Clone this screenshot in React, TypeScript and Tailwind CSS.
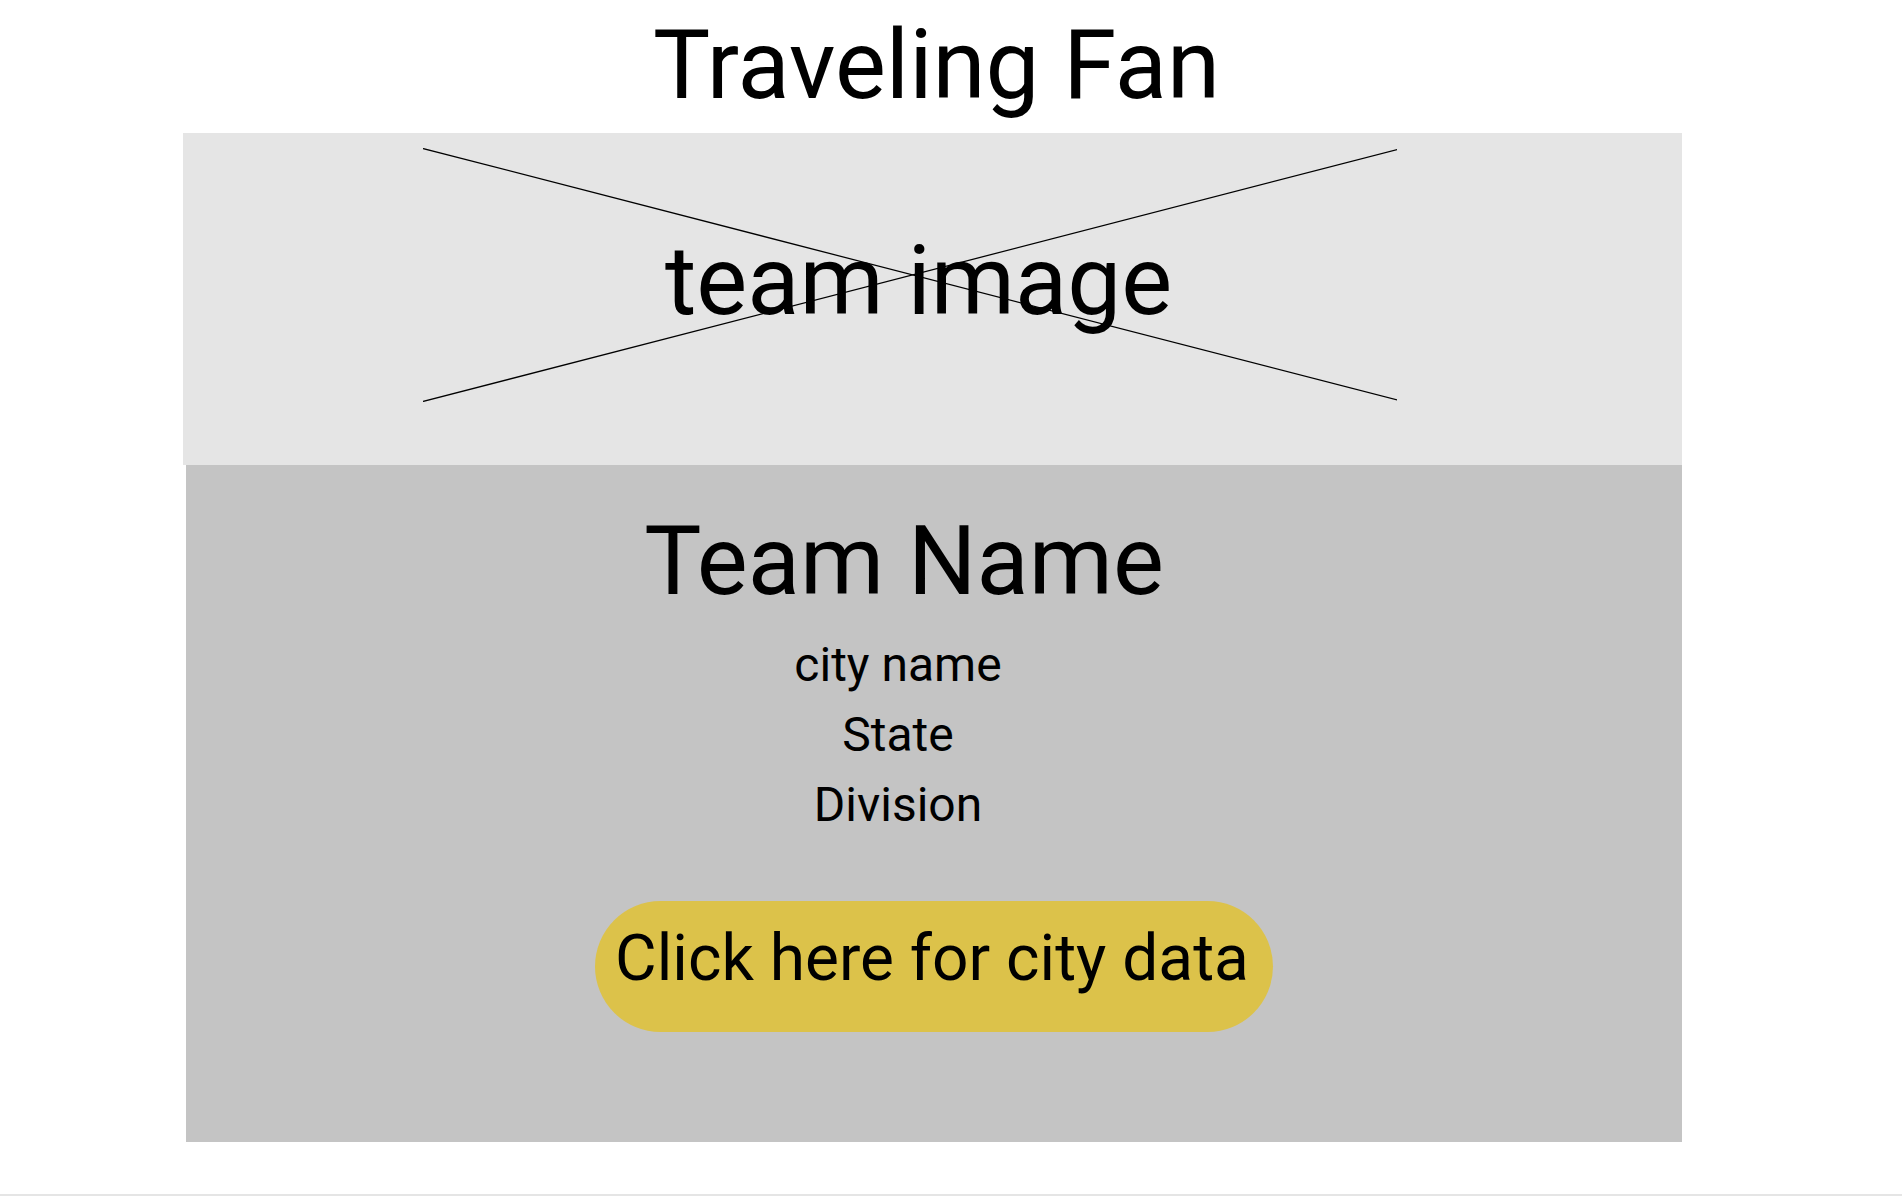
function ImageCross() {
  return (
    <svg
      aria-hidden="true"
      className="absolute top-[15px] left-[16%] h-[254px] w-[65%]"
      viewBox="0 0 975 254"
      preserveAspectRatio="none"
      fill="none"
      stroke="black"
      strokeWidth="1.25"
    >
      <line x1="0" y1="0.5" x2="975" y2="252" />
      <line x1="0" y1="253.5" x2="975" y2="1.5" />
    </svg>
  );
}

export default function App() {
  return (
    <div className="flex min-h-screen flex-col bg-white text-black [font-family:Roboto,sans-serif]">
      <main className="flex flex-col pr-[220px] pl-[183px] text-center">
        <h1 className="pt-2 pb-[10px] pl-2 text-[96px] leading-[115px]">Traveling Fan</h1>

        <section className="relative bg-[#e5e5e5] pt-[92px] pr-7 pb-32">
          <p className="text-[96px] leading-[112px]">team image</p>
          <ImageCross />
        </section>

        <section className="ml-[3px] bg-[#c4c4c4] pt-10 pb-[110px]">
          <h2 className="pr-[60px] text-[96px] leading-[112px]">Team Name</h2>
          <ul className="mt-[13px] pr-[72px] text-5xl leading-[70px]">
            <li>city name</li>
            <li>State</li>
            <li>Division</li>
          </ul>
          <button
            type="button"
            className="mt-[61px] cursor-pointer rounded-full bg-[#dcc24a] pt-5 pr-6 pb-9 pl-5 text-[64px] leading-[75px]"
          >
            Click here for city data
          </button>
        </section>
      </main>

      <hr className="mt-auto border-t-2 border-[#e5e5e5]" />
    </div>
  );
}
